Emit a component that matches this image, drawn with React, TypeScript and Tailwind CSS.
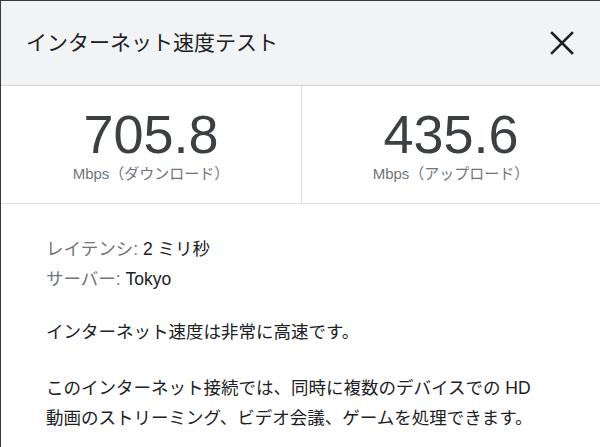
const font = { fontFamily: '"Liberation Sans", "Noto Sans CJK JP", sans-serif' };

interface SpeedStatProps {
  value: string;
  label: string;
  divider?: boolean;
}

const SpeedStat = ({ value, label, divider }: SpeedStatProps) => (
  <div
    className={`flex flex-col items-center pt-[18px] ${divider ? 'border-r border-[#dadce0]' : ''}`}
  >
    <div className="text-[54px] leading-[60px] text-[#3c4043]">{value}</div>
    <div className="text-[15px] leading-[20px] text-[#70757a]">{label}</div>
  </div>
);

export default function App() {
  return (
    <div
      className="w-[600px] h-[447px] overflow-hidden bg-white border-l border-t border-[#3a3a3a]"
      style={font}
    >
      <div className="h-[85px] flex items-center justify-between pl-[25px] pr-[26px] bg-[#f1f3f4] border-b border-[#d0d2d5]">
        <h1 className="text-[21px] leading-[28px] text-[#202124]">インターネット速度テスト</h1>
        <button className="p-0">
          <svg width="24" height="24" viewBox="0 0 24 24" className="text-[#202124]">
            <path d="M2 2L22 22M22 2L2 22" stroke="currentColor" strokeWidth="2.6" strokeLinecap="square" />
          </svg>
        </button>
      </div>

      <div className="grid grid-cols-[301px_1fr] h-[118px] border-b border-[#dadce0]">
        <SpeedStat value="705.8" label="Mbps（ダウンロード）" divider />
        <SpeedStat value="435.6" label="Mbps（アップロード）" />
      </div>

      <div className="pl-[45px] pr-[30px] pt-[30px] text-[17.5px] leading-[30px] text-[#202124]">
        <div>
          <span className="text-[#70757a]">レイテンシ: </span>
          <span>2 ミリ秒</span>
        </div>
        <div>
          <span className="text-[#70757a]">サーバー: </span>
          <span>Tokyo</span>
        </div>
        <p className="mt-[23px]">インターネット速度は非常に高速です。</p>
        <p className="mt-[26px]">
          このインターネット接続では、同時に複数のデバイスでの HD
          <br />
          動画のストリーミング、ビデオ会議、ゲームを処理できます。
        </p>
      </div>
    </div>
  );
}
